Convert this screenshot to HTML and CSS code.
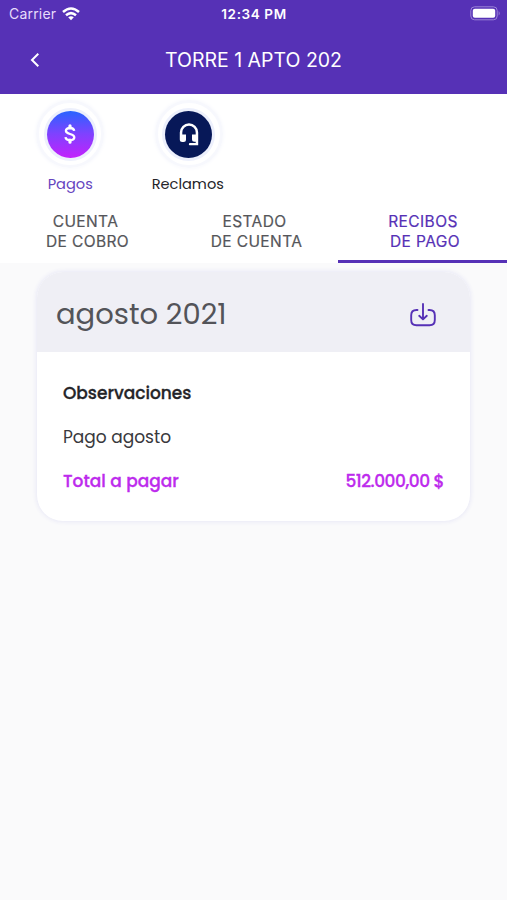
FILE: index.html
```html
<!DOCTYPE html>
<html lang="es">
<head>
<meta charset="utf-8">
<title>Torre 1 Apto 202</title>
<link rel="stylesheet" href="styles.css">
</head>
<body>
<header class="top">
  <div class="status">
    <span class="carrier">Carrier
      <svg width="18" height="14" viewBox="0 0 18 14" fill="none" stroke="#fff" stroke-width="2.5"><path d="M1 5Q9-2 17 5M4 8.3Q9 4 14 8.3"/><path d="M6.2 10.3Q9 8 11.8 10.3L9 13.3Z" fill="#fff" stroke="none"/></svg>
    </span>
    <span class="clock">12:34 PM</span>
    <svg class="battery" width="31" height="15" viewBox="0 0 31 15"><rect x=".8" y=".8" width="26.4" height="13" rx="3.8" fill="none" stroke="#9c83d8"/><rect x="2.8" y="2.8" width="22.4" height="9" rx="2" fill="#fff"/><path d="M28.7 5q2 2.3 0 4.6z" fill="#9c83d8"/></svg>
  </div>
  <div class="bar">
    <svg class="back" width="10" height="16" viewBox="0 0 10 16" fill="none" stroke="#fff" stroke-width="2"><path d="M8.3 1.8 2 8l6.3 6.2"/></svg>
    <h1>TORRE 1 APTO 202</h1>
  </div>
</header>
<nav class="panel">
  <div class="shortcuts">
    <a class="shortcut active">
      <span class="ring"><span class="disc pay"><svg width="14" height="22" viewBox="0 0 14 22" fill="none" stroke="#fff" stroke-width="2.3"><path d="M11.2 7.8C11 6 9.400 5 7 5 4.500 5 2.900 6 2.900 7.800 2.900 9.900 4.800 10.400 7 11s4.300 1.200 4.300 3.200c0 1.800-1.700 2.900-4.300 2.900-2.700 0-4.300-1.100-4.500-3"/><path d="M7 2.800v2M7 17.200v2" stroke-width="3.2" stroke-linecap="round"/></svg></span></span>
      <span class="name">Pagos</span>
    </a>
    <a class="shortcut">
      <span class="ring"><span class="disc help"><svg width="20" height="24" viewBox="0 0 20 24"><path d="M.8 17.500v-7a9.200 9.200 0 0 1 18.400 0v12.800h-8.500a1.200 1.200 0 0 1 0-2.300h6v-1.200h-1.200a2.500 2.500 0 0 1-2.500-2.500V12.500h3.700v-2a6.700 6.700 0 0 0-13.400 0v2H7v5a2.500 2.500 0 0 1-2.500 2.500H3.300A2.500 2.500 0 0 1 .8 17.500z" fill="#fff"/></svg></span></span>
      <span class="name">Reclamos</span>
    </a>
  </div>
  <div class="tabs">
    <a class="tab"><span class="up">CUENTA</span><span>DE COBRO</span></a>
    <a class="tab"><span class="up">ESTADO</span><span>DE CUENTA</span></a>
    <a class="tab selected"><span class="up">RECIBOS</span><span>DE PAGO</span></a>
  </div>
</nav>
<main>
  <article class="card">
    <div class="card-head">
      <h2>agosto 2021</h2>
      <svg width="26" height="24" viewBox="0 0 26 24" fill="none" stroke="#5631b6" stroke-width="1.900" stroke-linecap="round" stroke-linejoin="round"><path d="M7.500 7H6.500Q1.200 7 1.200 12.300v4.600q0 5.300 5.300 5.300h13q5.300 0 5.300-5.300v-4.600Q24.800 7 19.500 7h-1M13 1v15.200M9.200 12.800l3.800 3.600 3.800-3.600"/></svg>
    </div>
    <div class="card-body">
      <h3 class="obs">Observaciones</h3>
      <p class="detail">Pago agosto</p>
      <div class="total"><span>Total a pagar</span><span class="amount">512.000,00 $</span></div>
    </div>
  </article>
</main>
</body>
</html>
```
FILE: styles.css
```css
* { box-sizing: border-box; }
body {
  margin: 0;
  min-height: 900px;
  background: #fafafb;
  color: #242428;
  font-family: Inter, "Liberation Sans", sans-serif;
}
h1, h2, h3, p { margin: 0; font-weight: 400; }
svg { display: block; }
.top { height: 94px; background: #5631b6; color: #fff; }
.status {
  height: 27px;
  padding: 0 6px 0 9px;
  display: grid;
  grid-template-columns: 1fr auto 1fr;
  align-items: center;
  font-size: 14px;
}
.carrier { display: flex; align-items: center; gap: 6px; letter-spacing: .2px; color: #e7dcfb; }
.clock { font-size: 13.500px; font-weight: 600; letter-spacing: .6px; margin-right: 2px; }
.battery { justify-self: end; }
.bar {
  height: 65px;
  display: grid;
  grid-template-columns: 60px 1fr 60px;
  align-items: center;
}
.back { margin-left: 30px; }
h1 { text-align: center; font-size: 19.500px; letter-spacing: 0; white-space: nowrap; padding-top: 1px; }
.panel { background: #fff; height: 169px; }
.shortcuts { display: flex; height: 110px; padding: 6px 0 0 11px; }
.shortcut { width: 118.500px; display: flex; flex-direction: column; align-items: center; }
.ring {
  width: 68px;
  height: 68px;
  border-radius: 50%;
  border: 3px solid #f7f8fd;
  box-shadow: 0 0 4px #f5f6fc;
  display: grid;
  place-items: center;
}
.disc {
  width: 47px;
  height: 47px;
  border-radius: 50%;
  box-shadow: 0 0 0 3px #edf0fc;
  display: grid;
  place-items: center;
}
.pay { background: linear-gradient(#2864ff, #7e42ff 48%, #c321fc); }
.help { background: #071858; }
.name, h2, .card-body { font-family: Poppins, Inter, sans-serif; white-space: nowrap; }
.name { font-size: 14.600px; line-height: 20px; margin: 6px 2px 0 0; }
.active .name { color: #6645bf; margin-right: 0; }
.tabs { height: 59px; display: grid; grid-template-columns: repeat(3, 1fr); }
.tab {
  display: flex;
  flex-direction: column;
  align-items: center;
  padding: 8px 0 0 6px;
  border-bottom: 3px solid transparent;
  color: #55565a;
  font-size: 15.500px;
  font-weight: 400;
  -webkit-text-stroke: .2px;
  line-height: 19.500px;
  letter-spacing: .4px;
}
.up { margin-right: 4px; }
.selected { color: #5631b6; border-color: #5631b6; padding-left: 5px; }
main { padding: 9px 37px; }
.card {
  height: 249px;
  border-radius: 26px;
  background: #fff;
  box-shadow: 0 0 4px 1px #e8e8f6;
  overflow: hidden;
}
.card-head {
  height: 80px;
  padding: 5px 34px 0 19px;
  background: #efeff5;
  display: flex;
  align-items: center;
  justify-content: space-between;
}
h2 { font-size: 29px; color: #535459; }
.card-body { padding: 30px 26px; font-size: 17px; line-height: 22px; }
.obs { font-size: 17px; font-weight: 500; -webkit-text-stroke: .3px; }
.detail { margin: 22px 0; color: #39393d; }
.total { display: flex; justify-content: space-between; color: #bd2bed; font-weight: 500; -webkit-text-stroke: .3px; }
.amount { letter-spacing: -.5px; }
```
